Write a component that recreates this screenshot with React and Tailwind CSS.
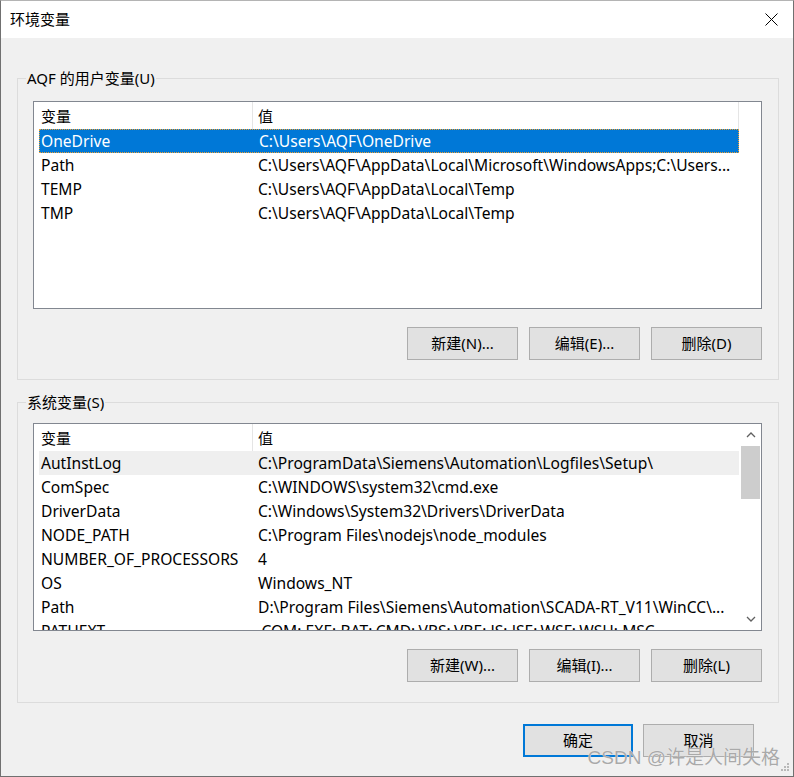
import React from "react";

const FONT = "font-['Noto_Sans','Noto_Sans_CJK_SC',sans-serif]";

function Btn({ children, primary, w = "w-[111px]" }) {
  return (
    <div
      className={`${w} h-[33px] flex items-center justify-center bg-[#e1e1e1] text-[15px] text-black ${
        primary ? "border-2 border-[#0078d7]" : "border border-[#adadad]"
      }`}
    >
      {children}
    </div>
  );
}

function Chevron({ up }) {
  return (
    <svg width="10" height="6" viewBox="0 0 10 6">
      <polyline
        points={up ? "1,5 5,1 9,5" : "1,1 5,5 9,1"}
        fill="none"
        stroke="#606060"
        strokeWidth="1.3"
      />
    </svg>
  );
}

function ListView({ rows, selected, soft, scrollbar }) {
  return (
    <div className="w-[729px] h-[208px] border border-[#828790] bg-white overflow-hidden flex">
      <div className="flex-1 flex flex-col overflow-hidden">
        <div className="h-[27px] flex shrink-0 items-center text-[15px]">
          <div className="w-[219px] h-full pl-[7px] flex items-center border-r border-[#e5e5e5] pt-[2px]">
            变量
          </div>
          <div
            className={`${
              scrollbar ? "flex-1" : "w-[486px] border-r border-[#e5e5e5]"
            } h-full pl-[5px] flex items-center pt-[2px]`}
          >
            值
          </div>
        </div>
        {rows.map((r, i) => {
          const isSel = i === selected;
          const isSoft = i === soft;
          return (
            <div
              key={i}
              className={`ml-[5px] w-[700px] h-[24px] shrink-0 flex items-center pt-[2px] text-[15.6px] whitespace-nowrap ${
                isSel
                  ? "bg-[#0078d7] text-white border border-dotted border-[#f0a030]"
                  : isSoft
                  ? "bg-[#efefef] text-black"
                  : "text-black"
              }`}
            >
              <div className={`w-[217px] ${isSel ? "pl-[1px]" : "pl-[2px]"} shrink-0 overflow-hidden`}>
                {r[0]}
              </div>
              <div className="pl-[2px] flex-1 overflow-hidden">{r[1]}</div>
            </div>
          );
        })}
      </div>
      {scrollbar && (
        <div className="w-[21px] h-full flex flex-col bg-white shrink-0">
          <div className="h-[22px] flex items-center justify-center">
            <Chevron up />
          </div>
          <div className="h-[53px] mx-[1px] bg-[#cdcdcd]" />
          <div className="flex-1" />
          <div className="h-[22px] flex items-center justify-center">
            <Chevron />
          </div>
        </div>
      )}
    </div>
  );
}

function Group({ label, children, top, pt, pb }) {
  return (
    <div className={`relative ml-[16px] w-[762px] border border-[#dcdcdc] ${top} ${pt} ${pb} pl-[15px]`}>
      <span className="absolute left-[8px] -top-[11px] px-[1px] leading-[20px] text-[15px] bg-[#f0f0f0] text-black">
        {label}
      </span>
      {children}
    </div>
  );
}

const userRows = [
  ["OneDrive", "C:\\Users\\AQF\\OneDrive"],
  ["Path", "C:\\Users\\AQF\\AppData\\Local\\Microsoft\\WindowsApps;C:\\Users..."],
  ["TEMP", "C:\\Users\\AQF\\AppData\\Local\\Temp"],
  ["TMP", "C:\\Users\\AQF\\AppData\\Local\\Temp"],
];

const sysRows = [
  ["AutInstLog", "C:\\ProgramData\\Siemens\\Automation\\Logfiles\\Setup\\"],
  ["ComSpec", "C:\\WINDOWS\\system32\\cmd.exe"],
  ["DriverData", "C:\\Windows\\System32\\Drivers\\DriverData"],
  ["NODE_PATH", "C:\\Program Files\\nodejs\\node_modules"],
  ["NUMBER_OF_PROCESSORS", "4"],
  ["OS", "Windows_NT"],
  ["Path", "D:\\Program Files\\Siemens\\Automation\\SCADA-RT_V11\\WinCC\\..."],
  ["PATHEXT", ".COM;.EXE;.BAT;.CMD;.VBS;.VBE;.JS;.JSE;.WSF;.WSH;.MSC"],
];

export default function App() {
  return (
    <div
      className={`${FONT} relative w-[794px] h-[777px] flex flex-col bg-[#f0f0f0] border border-[#707070] border-t-[#b4b4b4] overflow-hidden text-black`}
    >
      <div className="h-[37px] shrink-0 bg-white flex items-center justify-between pl-[9px] pr-[15px]">
        <span className="text-[15px]">环境变量</span>
        <svg width="13" height="13" viewBox="0 0 13 13">
          <path d="M0.5 0.5 L12.5 12.5 M12.5 0.5 L0.5 12.5" stroke="#000" strokeWidth="1" />
        </svg>
      </div>

      <Group label="AQF 的用户变量(U)" top="mt-[40px]" pt="pt-[22px]" pb="pb-[19px]">
        <ListView rows={userRows} selected={0} />
        <div className="mt-[18px] w-[729px] flex justify-end gap-[11px]">
          <Btn>新建(N)...</Btn>
          <Btn>编辑(E)...</Btn>
          <Btn>删除(D)</Btn>
        </div>
      </Group>

      <Group label="系统变量(S)" top="mt-[22px]" pt="pt-[20px]" pb="pb-[20px]">
        <ListView rows={sysRows} soft={0} scrollbar />
        <div className="mt-[18px] w-[729px] flex justify-end gap-[11px]">
          <Btn>新建(W)...</Btn>
          <Btn>编辑(I)...</Btn>
          <Btn>删除(L)</Btn>
        </div>
      </Group>

      <div className="mt-[21px] flex justify-end gap-[10px] pr-[39px]">
        <Btn primary w="w-[110px]">确定</Btn>
        <Btn>取消</Btn>
      </div>

      <div className="absolute right-[13px] bottom-[6px] text-[19px] leading-[24px] text-[#a9a9a9] font-['Liberation_Sans','Noto_Sans_CJK_SC',sans-serif] [text-shadow:0_0_1px_#ffffff]">
        CSDN @许是人间失格
      </div>
      <svg className="absolute right-[3px] bottom-[4px]" width="9" height="9" viewBox="0 0 9 9">
        <rect x="6" y="0" width="2" height="2" fill="#b8b8b8" />
        <rect x="3" y="3" width="2" height="2" fill="#b8b8b8" />
        <rect x="6" y="3" width="2" height="2" fill="#b8b8b8" />
        <rect x="0" y="6" width="2" height="2" fill="#b8b8b8" />
        <rect x="3" y="6" width="2" height="2" fill="#b8b8b8" />
        <rect x="6" y="6" width="2" height="2" fill="#b8b8b8" />
      </svg>
    </div>
  );
}
